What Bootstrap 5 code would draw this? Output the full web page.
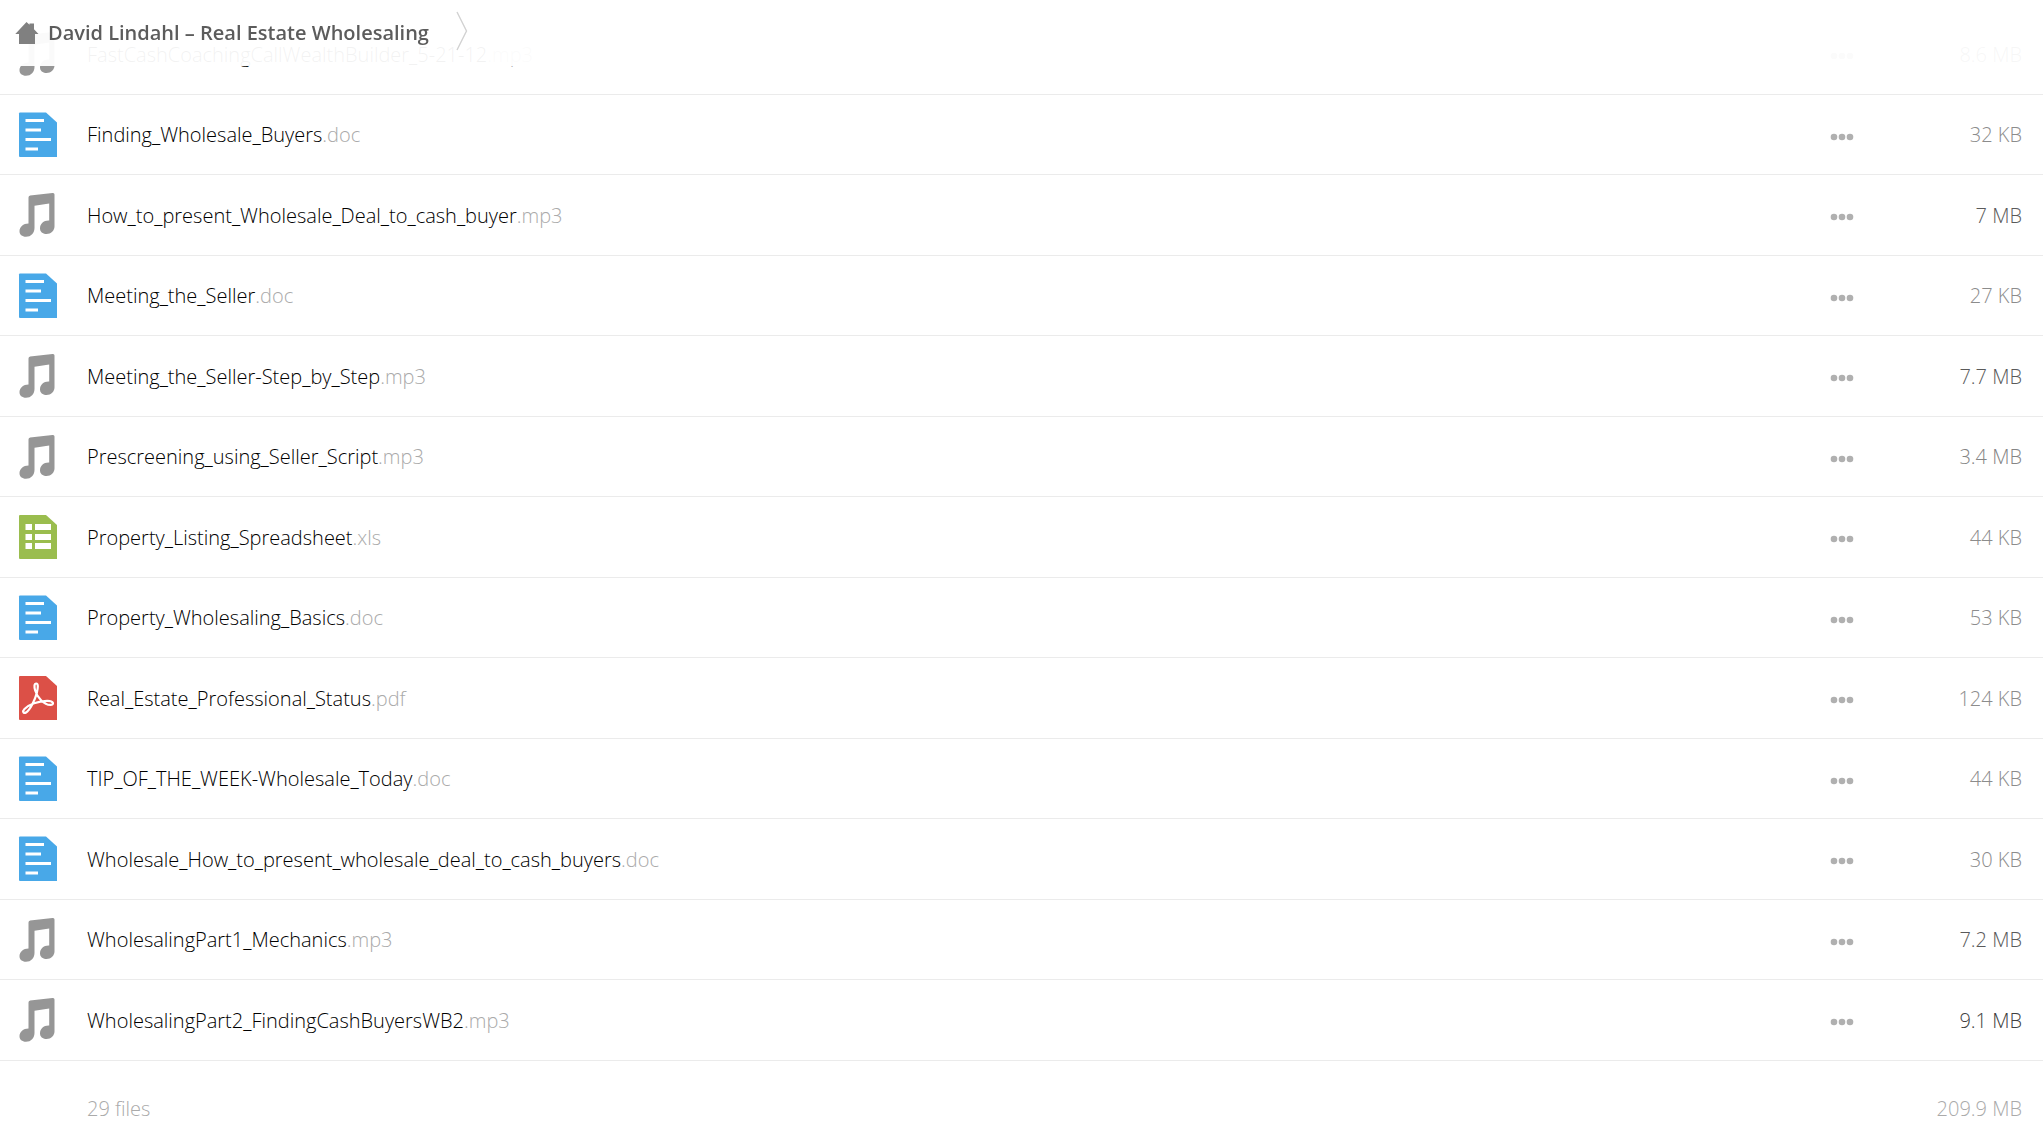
<!DOCTYPE html>
<html lang="en">
<head>
<meta charset="utf-8">
<meta name="viewport" content="width=device-width, initial-scale=1">
<title>David Lindahl – Real Estate Wholesaling</title>
<link href="https://cdn.jsdelivr.net/npm/bootstrap@5.3.0/dist/css/bootstrap.min.css" rel="stylesheet">
<style>
  body { font-family: "Open Sans", sans-serif; font-weight: 300; font-size: 20px; line-height: 28px; color: #000; background: #fff; }
  .crumb-bar { height: 66px; background: rgba(255, 255, 255, .95); }
  .crumb-home { margin-left: 15px; gap: 9px; color: #5c5c5c; font-weight: 600; }
  .crumb-arrow { margin-left: 27px; margin-bottom: 4px; }
  .file-list { padding-top: 14px; }
  .file-row { height: 81px; border-bottom: 1px solid #ebebeb; padding: 0 21px 0 18px; }
  .file-row:nth-child(even) { height: 80px; }
  .file-icon { width: 40px; height: 46px; margin-right: 29px; }
  .file-link { color: #000; padding-top: 1px; }
  .file-ext { color: #aaa; }
  .file-more { width: 32px; height: 32px; margin-top: 4px; }
  .file-size { width: 164px; padding-top: 1px; }
  .tone-a { color: #8c8c8c; }
  .tone-b { color: #5a5a5a; }
  .tone-c { color: #858585; }
  .tone-d { color: #404040; }
  .list-total { padding: 34px 21px 24px 87px; color: #aaa; }
</style>
<script src="https://cdn.jsdelivr.net/npm/bootstrap@5.3.0/dist/js/bootstrap.bundle.min.js"></script>
</head>
<body>
<svg class="d-none" aria-hidden="true">
  <symbol id="i-doc" viewBox="0 0 40 46">
    <path fill="#48a8e8" d="M2 .5h26l11 10v34q0 .5-.5.5H2q-1 0-1-1v-42.500q0-1 1-1z"/>
    <path fill="#fff" d="M7.500 7H26v3H7.500zM7.500 16.500H23v3H7.500zM7.500 26H33v3H7.500zM7.500 35.500H20v3H7.500z"/>
  </symbol>
  <symbol id="i-xls" viewBox="0 0 40 46">
    <path fill="#9abd4e" d="M2 1h26l11 10v33.500q0 .5-.5.5H2q-1 0-1-1V2q0-1 1-1z"/>
    <path fill="#fff" d="M7.500 10H14v6H7.500zM17 10h16v6H17zM7.500 20H14v6H7.500zM17 20h16v6H17zM7.500 29H14v6H7.500zM17 29h16v6H17z"/>
  </symbol>
  <symbol id="i-pdf" viewBox="0 0 40 46">
    <path fill="#dc5047" d="M2 1h26l11 10v33.500q0 .5-.5.5H2q-1 0-1-1V2q0-1 1-1z"/>
    <path fill="none" stroke="#fff" stroke-width="2.200" stroke-linejoin="round" d="M18.200 8.500c2.300 0 1.800 4.500.6 9.500C17 25 12 35 8 37.500c-2.500 1.500-4-1-1.500-3.500C11 29.500 20 26 29 25.800c7-.2 7.500 4 3.500 4.100C26 30 19 22 17.200 15.500 16 11.500 16.200 8.500 18.200 8.500z"/>
  </symbol>
  <symbol id="i-mp3" viewBox="0 0 40 46">
    <path fill="#969696" d="M10.500 5.500q0-1.600 1.600-1.900L34.500 1q2-.3 2 1.600V34.500c0 4-3.500 7.500-8 7.500-4 0-6.500-2.500-6.500-5.500 0-4.500 3.500-8 8.500-8h.7V11.500L16.500 13.700V36c0 5-3.500 8.800-8.500 8.800-4 0-6.500-2.300-6.500-5.500 0-4.300 3.800-7.800 9-7.800z"/>
  </symbol>
  <symbol id="i-more" viewBox="0 0 32 32">
    <g fill="#b0b0b0"><circle cx="8" cy="16" r="3.300"/><circle cx="16" cy="16" r="3.300"/><circle cx="24" cy="16" r="3.300"/></g>
  </symbol>
</svg>

<header class="crumb-bar fixed-top">
  <nav class="d-flex align-items-center h-100" aria-label="Breadcrumb">
    <a class="crumb-home d-flex align-items-center text-decoration-none" href="#">
      <svg width="24" height="22" viewBox="0 0 24 22" aria-hidden="true"><path fill="#808080" d="M11.500 0l3 2.800V1.500H19v5.700l4.500 4.800H20v10H4V12H.3z"/></svg>
      <span>David Lindahl – Real Estate Wholesaling</span>
    </a>
    <svg class="crumb-arrow" width="12" height="40" viewBox="0 0 12 40" aria-hidden="true"><path fill="none" stroke="#d2d2d2" stroke-width="1.400" d="M1 1l9.500 19L1 39"/></svg>
  </nav>
</header>

<main>
  <ul class="file-list list-unstyled mb-0" id="files"></ul>
  <footer class="list-total d-flex justify-content-between"><span>29 files</span><span>209.9 MB</span></footer>
</main>

<script>
  const files = [
    ["FastCashCoachingCallWealthBuilder_5-21-12", "mp3", "8.6 MB", "b"],
    ["Finding_Wholesale_Buyers", "doc", "32 KB", "a"],
    ["How_to_present_Wholesale_Deal_to_cash_buyer", "mp3", "7 MB", "b"],
    ["Meeting_the_Seller", "doc", "27 KB", "a"],
    ["Meeting_the_Seller-Step_by_Step", "mp3", "7.7 MB", "b"],
    ["Prescreening_using_Seller_Script", "mp3", "3.4 MB", "c"],
    ["Property_Listing_Spreadsheet", "xls", "44 KB", "a"],
    ["Property_Wholesaling_Basics", "doc", "53 KB", "a"],
    ["Real_Estate_Professional_Status", "pdf", "124 KB", "a"],
    ["TIP_OF_THE_WEEK-Wholesale_Today", "doc", "44 KB", "a"],
    ["Wholesale_How_to_present_wholesale_deal_to_cash_buyers", "doc", "30 KB", "a"],
    ["WholesalingPart1_Mechanics", "mp3", "7.2 MB", "b"],
    ["WholesalingPart2_FindingCashBuyersWB2", "mp3", "9.1 MB", "d"]
  ];
  document.getElementById("files").innerHTML = files.map(([name, ext, size, tone]) => `
    <li class="file-row d-flex align-items-center">
      <svg class="file-icon flex-shrink-0" aria-hidden="true"><use href="#i-${ext}"/></svg>
      <a class="file-link text-decoration-none me-auto" href="#">${name}<span class="file-ext">.${ext}</span></a>
      <button class="file-more btn p-0 border-0 d-flex" type="button" aria-label="Actions for ${name}"><svg width="32" height="32" aria-hidden="true"><use href="#i-more"/></svg></button>
      <span class="file-size text-end tone-${tone}">${size}</span>
    </li>`).join("");
</script>
</body>
</html>
